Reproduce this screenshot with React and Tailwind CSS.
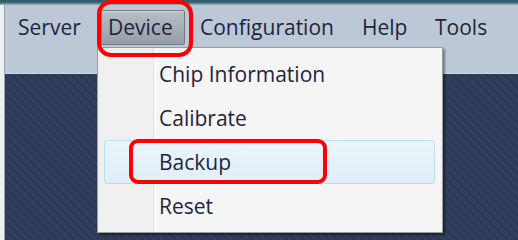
export default function App() {
  const font = { fontFamily: '"Open Sans", "Noto Sans", sans-serif' };
  return (
    <div className="relative w-[518px] h-[240px] overflow-hidden bg-[#bdc8d7] flex flex-col" style={font}>
      <div className="h-[5px] shrink-0 bg-[linear-gradient(to_bottom,#2c5862_0%,#3f6b78_55%,#a9bccb_100%)]" />
      <div className="flex flex-1">
        <div className="w-[5px] shrink-0 bg-[#eef1f4] border-r border-[#9aa3ad]" />
        <div className="flex-1 flex flex-col">
          <div className="h-[69px] shrink-0 bg-[#bdc8d7] border-b border-[#cfd7e2] pt-[5px] pl-[13px]">
            <div className="flex h-[35px] items-center text-[21px] leading-[35px] text-[#1e2440]">
              <div className="w-[83px]">Server</div>
              <div className="w-[84px] h-[35px] pl-[6px] rounded-[2px] border border-[#727a83] bg-[linear-gradient(to_bottom,#b9bfc6,#a4abb3_60%,#969da6)] shadow-[inset_0_1px_0_rgba(255,255,255,0.35)] leading-[33px]">Device</div>
              <div className="w-[162px] ml-[15px]">Configuration</div>
              <div className="w-[73px]">Help</div>
              <div>Tools</div>
            </div>
          </div>
          <div className="flex-1 bg-[repeating-linear-gradient(45deg,#2b3a58_0px,#2b3a58_3px,#313f5c_3px,#313f5c_6px)]" />
        </div>
      </div>

      {/* dropdown menu */}
      <div className="absolute left-[97px] top-[47px] w-[346px] h-[186px] bg-[#f5f5f5] border border-[#9c9c9c] shadow-[2px_2px_2px_rgba(0,0,0,0.4)] pt-[4px] pl-[6px] pr-[7px]">
        <div className="absolute left-0 top-0 bottom-0 w-[56px] bg-[#f0f0f0] border-r border-[#e2e3e3]" />
        <div className="absolute left-[57px] top-0 bottom-0 w-px bg-white" />
        <div className="relative flex flex-col text-[21px] leading-[44px] text-[#1e2440]">
          <div className="h-[44px] pl-[54px] border border-transparent leading-[42px]">Chip Information</div>
          <div className="h-[44px] pl-[54px] border border-transparent leading-[42px]">Calibrate</div>
          <div className="h-[44px] pl-[54px] rounded-[3px] border border-[#b9dcef] bg-[linear-gradient(to_bottom,#eaf4fa,#e0eef7)] leading-[42px]">Backup</div>
          <div className="h-[44px] pl-[54px] border border-transparent leading-[42px]">Reset</div>
        </div>
      </div>

      {/* red annotations */}
      <div className="absolute left-[97px] top-0 w-[96px] h-[57px] border-4 border-[#ff0000] rounded-[14px]" />
      <div className="absolute left-[129px] top-[139px] w-[198px] h-[45px] border-4 border-[#ff0000] rounded-[9px]" />
    </div>
  );
}
